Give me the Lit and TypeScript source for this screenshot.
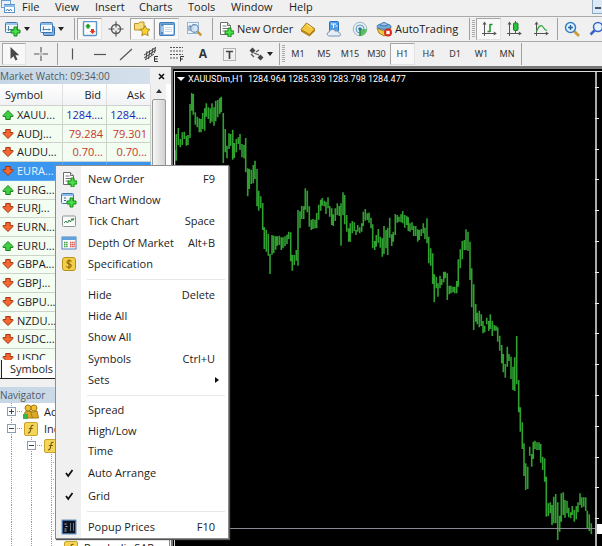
import { LitElement, html, svg, css, nothing } from "lit";
import { customElement, state } from "lit/decorators.js";
import { classMap } from "lit/directives/class-map.js";

const plus = (x: number, y: number) =>
  svg`<path d="M${x + 3} ${y}h3v3h3v3h-3v3h-3v-3h-3v-3h3z" fill="#4be04b" stroke="#128a12" stroke-width="1"/>`;

const dollarTile = svg`<rect x="1.500" y="1.500" width="13" height="13" rx="2.500" fill="#f4cf45" stroke="#b8901c"/><path d="M10.500 5.500C9.500 4 5.800 4.200 5.900 6.200C6 8.200 10.300 7.600 10.300 9.800C10.200 11.900 6.300 11.900 5.300 10.300M8 3.200v9.800" fill="none" stroke="#8a6410" stroke-width="1.100"/>`;

const sheetPlus = svg`<path d="M2.500 1.500h7l3 3v9h-10z" fill="#fff" stroke="#6d6d6d"/><path d="M9.500 1.500v3h3" fill="#ddd" stroke="#6d6d6d"/><path d="M4.500 5h4M4.500 7.500h6M4.500 10h4" stroke="#777"/>${plus(7, 7)}`;

const axes = svg`<path d="M3.500 2v13M1 12.500h13.500" stroke="#555" fill="none"/><path d="M3.500 .5l-2 3h4zM15.800 12.500l-3-2v4z" fill="#555"/>`;

const icons: Record<string, unknown> = {
  app: svg`<rect x="1.500" y="0.500" width="9" height="7" fill="#e6f1fb" stroke="#6aa0d0"/><rect x="4.500" y="4.500" width="10" height="8" fill="#fff" stroke="#5b94c8"/><path d="M4 5h11v2H4z" fill="#8dbbe6"/><path d="M6 11l1.500-2 1.500 2 1.500-2 1.500 2" fill="none" stroke="#4486c4"/>`,
  newChart: svg`<rect x=".5" y="1.500" width="12" height="10" rx="1" fill="#eef6fd" stroke="#3d78b4"/><path d="M1 2h11v2H1z" fill="#9cc4ea"/><path d="M3.500 5v5M2.500 8.500h6" stroke="#5581ad"/>${plus(6, 6)}`,
  profiles: svg`<rect x="4.500" y="5.500" width="11" height="9" rx="1" fill="#7fb0e0" stroke="#3469a0"/><rect x="1.500" y="1.500" width="12" height="10" rx="1" fill="#f2f8fe" stroke="#3d78b4"/><path d="M2 2h11v2H2z" fill="#8dbbe6"/><path d="M4.500 5.500v4M3.500 8.500h8M10 7.500v2" stroke="#5581ad"/>`,
  market: svg`<rect x="1.500" y=".5" width="13" height="14" rx="1" fill="#fff" stroke="#5b94c8" stroke-width="1.400"/><path d="M6 2.500l3 3H7.500v2h-3v-2H3z" fill="#22a022"/><path d="M10.500 13l-3-3H9V8h3v2h1.500z" fill="#e23a1a"/>`,
  target: svg`<circle cx="8" cy="8" r="4.500" fill="none" stroke="#555" stroke-width="1.400"/><path d="M8 .5v6M8 9.500v6M.5 8h6M9.500 8h6" stroke="#555" stroke-width="1.200"/>`,
  favorite: svg`<path d="M.5 2.500h4l1.500-1.500h4v8h-9.500z" fill="#f5dd78" stroke="#b89228"/><path d="M11 4.500l1.600 3.400 3.400.5-2.500 2.500.7 3.800-3.200-1.800-3.200 1.800.7-3.800L6 8.400l3.500-.5z" fill="#fbd52d" stroke="#a77b13" stroke-width=".9"/>`,
  panel: svg`<rect x=".7" y="1.700" width="14.600" height="12.600" rx="1.200" fill="#fff" stroke="#3d7cbd" stroke-width="1.400"/><path d="M1.500 2.500h13v1.500h-13zM1.500 3h3v10.600h-3z" fill="#4d8bc9"/><path d="M2 6h2M2 8h2M2 10h2" stroke="#fff"/><path d="M6 6.500h7M6 8.500h7M6 10.500h7" stroke="#c9d7e6"/>`,
  tester: svg`<rect x="1.500" y="1.500" width="11" height="11" fill="#eef5fb" stroke="#93b6d6"/><path d="M3 10V5h2v5M7 9V3.500" stroke="#4d80b2" fill="none"/><circle cx="8.500" cy="7.500" r="3.800" fill="#cfe3f7" fill-opacity=".8" stroke="#6e8dad" stroke-width="1.200"/><path d="M11.500 10.500l3.700 4" stroke="#c59332" stroke-width="2.500"/>`,
  sheetPlus,
  gold: svg`<path d="M1 8.500L6.500 2l8.500 6-5.500 5.500z" fill="#f1c63c" stroke="#a2761a"/><path d="M1 8.500l8.500 5L15 8v2L9.500 15.500 1 10.500z" fill="#b5831b"/><path d="M6.800 3.500l5 3.500" stroke="#fff1ae"/>`,
  cloud: svg`<rect x="3.500" y=".5" width="9" height="10" rx="1" fill="#4e9ee8" stroke="#2b70b8"/><path d="M5 3h5M7.500 3v4M9.500 5h2" stroke="#fff"/><path d="M3.500 15C.5 15 .5 11 3.200 11c.5-3 5-3.500 6.300-.8 2-.8 3.300.4 3.200 1.600 2.600 0 2.300 3.200.3 3.200z" fill="#e4edf6" stroke="#7793b5"/>`,
  signal: svg`<circle cx="8" cy="8" r="6.800" fill="#e3eef3" stroke="#9bb6c4"/><path d="M8 8V15A7 7 0 0 0 15 8z" fill="#5ec25e"/><circle cx="8" cy="8" r="4" fill="none" stroke="#6298b4"/><circle cx="8" cy="8" r="1.800" fill="#2d78a8"/><path d="M8 9v6" stroke="#22922a" stroke-width="1.500"/>`,
  auto: svg`<path d="M1 7l7 3 7-4-2 6-5 3-5-3z" fill="#f0c845" stroke="#a97e18"/><ellipse cx="8" cy="5.500" rx="7" ry="2.800" fill="#78abd9" stroke="#3b77af"/><path d="M4.500 4.800C5 .5 11 .5 11.500 4.800z" fill="#9dc6ea" stroke="#3b77af"/><circle cx="12" cy="11.500" r="4" fill="#d92a1b"/><rect x="10.300" y="9.800" width="3.400" height="3.400" fill="#fff"/>`,
  bars: svg`${axes}<path d="M9 3v8M9 3.500h2.500M6.500 10.500H9" stroke="#1f8f2c" stroke-width="1.500" fill="none"/>`,
  candles: svg`${axes}<path d="M9.500 0v12" stroke="#187d22"/><rect x="7.500" y="2" width="4.500" height="7.500" rx="1" fill="#27c43a" stroke="#187d22"/>`,
  line: svg`${axes}<path d="M3.500 10.500C6 4 8.500 3.500 10 6S12 9 14 9.500" stroke="#2aa53a" stroke-width="1.200" fill="none"/>`,
  zoomIn: svg`<path d="M10 10l5 5" stroke="#cd9d36" stroke-width="2.800"/><circle cx="6.500" cy="6.500" r="5" fill="#e4f2fe" stroke="#3a7dc0" stroke-width="1.500"/><path d="M6.500 4v5M4 6.500h5" stroke="#2464a8" stroke-width="1.500"/>`,
  zoomOut: svg`<path d="M5.500 9.500l-4 4" stroke="#3d62c8" stroke-width="2.500"/><circle cx="9" cy="6" r="4.500" fill="#e4f2fe" stroke="#3a62c8" stroke-width="1.500"/>`,
  cursor: svg`<path d="M4.500 1v12l3-2.800 2 4.300 2-1-2-4.200h3.800z" fill="#484848"/>`,
  cross: svg`<path d="M8 1v5.500M8 9.500V15M1 8h5.500M9.500 8H15M8 7.500v1" stroke="#555" stroke-width="1.100"/>`,
  vline: svg`<path d="M7.500 2.500v11" stroke="#555" stroke-width="1.200"/>`,
  hline: svg`<path d="M2 8.500h12" stroke="#555" stroke-width="1.200"/>`,
  diag: svg`<path d="M2 14L14 3" stroke="#555" stroke-width="1.200"/>`,
  channel: svg`<path d="M1 9l11-7M1 12l12-8M2 14l9-6M4 5l-1 8M7 4L5.500 13M10 2L8.500 9M12.500 1l-1 6" stroke="#444" fill="none"/><path d="M15 10.500h-3.500v5H15M11.500 13h3" stroke="#333" fill="none"/>`,
  fibo: svg`<path d="M1 1.500h13M1 5h13M1 8.500h13M1 12h9" stroke="#555" stroke-dasharray="2 1"/><path d="M15 10.500h-3.500v5M11.500 13H14" stroke="#333" fill="none"/>`,
  textBox: svg`<rect x="2.500" y="2.500" width="12" height="12" fill="none" stroke="#777" stroke-dasharray="1 1"/><path d="M5 5.500h7M8.500 5.500v7.500" stroke="#444" stroke-width="1.700"/>`,
  arrows: svg`<path d="M4.500 1.500l3 3-3 3-3-3zM12.500 8.500l3 3-3 3-3-3z" fill="#444"/><path d="M3 8l3 3M6 7l5 2M8 6l3-2" stroke="#555" stroke-width="1.300"/>`,
  chartPlus: svg`<rect x=".5" y="1.500" width="12" height="10" rx="1" fill="#eef6fd" stroke="#3d78b4"/><path d="M1 2h11v2H1z" fill="#8dbbe6"/><path d="M3 6h2M3 8.500h2" stroke="#345f8d"/>${plus(6, 6)}`,
  tick: svg`<rect x="1.500" y="3" width="13" height="10.500" rx="1" fill="#fbfdfb" stroke="#8b9490"/><path d="M3 10l2-2 1.500 2L8 7l1.500 2L11 5.500l1 2L13 5" fill="none" stroke="#35804a"/>`,
  depth: svg`<rect x="1" y="2" width="14" height="12" fill="#f8fbfe" stroke="#4f83b8"/><path d="M1 2h14v3H1z" fill="#5fa0dd"/><path d="M3 7.500h4M3 9.500h4M3 11.500h4" stroke="#48a04b" stroke-dasharray="1.500 .6" stroke-width="1.300"/><path d="M9 7.500h5M9 9.500h5M9 11.500h5" stroke="#d65448" stroke-dasharray="1.500 .6" stroke-width="1.300"/>`,
  spec: dollarTile,
  check: svg`<path d="M5 8l2.200 3L11.500 5" fill="none" stroke="#111" stroke-width="1.800"/>`,
  popup: svg`<rect x="1.200" y="1.200" width="13.600" height="13.600" fill="#0b1220" stroke="#4c7fb3" stroke-width="1.200"/><path d="M3.500 5h2M4.500 7.500h2M3.500 10h2M3.500 12h2" stroke="#bbb"/><path d="M9.500 4v8M12.500 4v8" stroke="#687484"/>`,
  func: svg`<rect x="1.500" y="1.500" width="13" height="13" rx="1.500" fill="#f5d557" stroke="#c9a22c"/><path d="M10.500 4.500c-2-.8-2.300.5-2.700 3s-.8 5-2.800 4.200M5.800 7.500h4" fill="none" stroke="#7a5a10" stroke-width="1.200"/>`,
  people: svg`<circle cx="5" cy="4" r="3" fill="#efc034" stroke="#a77b13"/><circle cx="11" cy="4" r="3" fill="#efc034" stroke="#a77b13"/><path d="M1 14l1-6 5-1 3 1 4-1 1.500 7z" fill="#dca825" stroke="#a77b13"/><path d="M7.500 7l2 7" stroke="#a77b13"/><path d="M0 10h5v5H0z" fill="#2fb84a"/>`,
  up: svg`<path d="M8 2L14.500 8.500V10H11v4H5v-4H1.500V8.500z" fill="#3fd045" stroke="#177a1c" stroke-width="1.300" stroke-linejoin="round"/>`,
  down: svg`<path d="M8 14L1.500 7.500V6H5V2h6v4h3.500v1.500z" fill="#f4682f" stroke="#a3300f" stroke-width="1.300" stroke-linejoin="round"/>`,
};

const icon = (name: string) =>
  html`<svg class="icon" viewBox="0 0 16 16" width="16" height="16" aria-hidden="true">${icons[name]}</svg>`;

/* Price bars: triplets of x, high and low in thirds of a pixel, relative to each run's origin. */
const runs = [
  { ox: 170, oy: 64, bars: "14 258 305,19 210 290,25 192 243,31 225 250,37 205 243,43 203 225,49 215 245,54 213 243,60 120 222,65 87 140,70 90 152,76 145 182,82 158 190,88 163 205,93 165 205,98 147 195,104 133 200,109 118 158,115 130 165,121 133 178,126 118 173,132 130 185,137 110 172,143 108 160,149 102 150,154 98 145,160 147 297,166 195 265,171 245 283,177 208 255,182 210 245,188 197 287,193 237 282,199 225 265,205 220 240,210 210 258,216 240 280,222 243 283,227 222 325,233 313 397,238 315 375,244 317 360,250 303 358,255 290 345,261 315 427,266 380 440,272 397 433,278 417 498,283 490 555,289 497 563,295 510 575,300 570 630,306 513 572,311 515 567,317 517 557,322 517 545,328 515 543,334 520 558,339 520 553,345 517 547,351 512 540,356 503 525,362 505 592,367 573 620,373 573 603,379 558 590,384 438 605,390 442 493,395 425 465,401 427 465,406 373 437,412 380 445,418 427 488,424 467 498,429 465 495,435 467 493,440 447 493,446 422 467,452 407 440,457 402 425,463 410 427,468 413 450,474 400 433" },
  { ox: 310, oy: 180, bars: "59 78 110,65 85 135,70 103 138,76 85 123,82 70 105,88 78 108,93 70 197,99 37 105,104 45 133,110 105 155,116 145 185,121 130 185,127 123 160,133 127 153,138 150 165,143 135 155,149 142 160,155 130 155,160 95 138,166 87 122,172 100 120,177 98 128,183 113 145,188 133 205,194 183 210,199 165 200,205 147 188,211 170 203,217 175 230,222 138 222,228 150 205,233 143 225,239 113 173,245 163 198,250 155 185,256 102 165,262 105 128,267 110 125,273 103 127,278 93 130,284 105 143,290 107 135,295 112 153,300 130 155,306 127 150,311 137 168,317 138 168,323 148 185,328 150 180,334 147 168,340 130 160,345 143 177,351 115 190,356 170 250,362 205 257,368 220 312,373 283 367,379 290 325,384 310 350,390 287 325,395 297 315,401 275 307,406 275 295,412 280 360,418 317 343,423 317 340,429 320 337,434 320 340,440 303 340" },
  { ox: 440, oy: 220, bars: "55 118 200,61 88 145,67 63 118,73 60 90,78 28 90,84 35 93,90 65 180,95 145 262,101 193 330,107 252 305,112 278 313,118 272 322,124 283 318,129 303 340,134 317 337,140 293 313,146 303 333,151 283 327,157 302 348,163 315 332,168 317 332,173 322 365,179 347 392,185 375 430,190 402 457,196 432 473,202 380 440,207 402 423,213 410 477,219 440 510,224 412 513,230 348 493" },
  { ox: 490, oy: 380, bars: "86 0 97,91 82 155,97 127 207,102 190 288,107 250 330,113 260 327,119 200 227,125 222 260,130 185 237,135 182 207,141 187 210,147 187 210,152 192 248,158 230 270,164 235 305,169 290 410,175 370 408,181 367 400,186 375 435,191 350 430,197 342 430,203 367 480,209 407 455,214 340 425,220 337 405,225 360 413,231 363 400,236 383 412,242 397 415,247 378 405,253 390 425,259 378 418,264 367 397,270 340 375,275 352 383,281 352 380,287 352 393,292 392 445,298 403 453,304 430 462" },
];

const barPath = runs
  .map((r) =>
    r.bars
      .split(",")
      .map((b) => {
        const [x, hi, lo] = b.split(" ").map((n) => Number(n) / 3);
        return `M${(r.ox + x).toFixed(1)} ${(r.oy + hi).toFixed(1)}V${(r.oy + lo).toFixed(1)}`;
      })
      .join("")
  )
  .join("");

const quotes: [string, string, string?, string?][] = [
  ["up", "XAUU...", "1284....", "1284...."],
  ["down", "AUDJ...", "79.284", "79.301"],
  ["down", "AUDU...", "0.70...", "0.70..."],
  ["down", "EURA..."],
  ["up", "EURG..."],
  ["down", "EURJ..."],
  ["down", "EURN..."],
  ["up", "EURU..."],
  ["down", "GBPA..."],
  ["down", "GBPJ..."],
  ["down", "GBPU..."],
  ["down", "NZDU..."],
  ["down", "USDC..."],
  ["down", "USDC..."],
];

type Entry = { label: string; key?: string; icon?: string; sub?: boolean };
const menuGroups: Entry[][] = [
  [
    { label: "New Order", key: "F9", icon: "sheetPlus" },
    { label: "Chart Window", icon: "chartPlus" },
    { label: "Tick Chart", key: "Space", icon: "tick" },
    { label: "Depth Of Market", key: "Alt+B", icon: "depth" },
    { label: "Specification", icon: "spec" },
  ],
  [
    { label: "Hide", key: "Delete" },
    { label: "Hide All" },
    { label: "Show All" },
    { label: "Symbols", key: "Ctrl+U" },
    { label: "Sets", sub: true },
  ],
  [
    { label: "Spread" },
    { label: "High/Low" },
    { label: "Time" },
    { label: "Auto Arrange", icon: "check" },
    { label: "Grid", icon: "check" },
  ],
  [{ label: "Popup Prices", key: "F10", icon: "popup" }],
];

@customElement("context-menu")
export class ContextMenu extends LitElement {
  static styles = css`
    :host {
      display: block;
      box-sizing: border-box;
      width: 174px;
      padding: 2px 0 0;
      border: 1px solid #8c8c8c;
      background: linear-gradient(90deg, #f0f0f0 25px, #fff 25px);
      box-shadow: 1px 1px 1px #555;
      color: #1c1c1c;
    }
    .group { display: grid; height: 107px; }
    .group.single { height: 22px; }
    .rule { height: 1px; margin: 4px 3px 4px 31px; background: #e8e8e8; }
    .item {
      display: grid;
      grid-template-columns: 24px 1fr auto;
      column-gap: 8px;
      align-items: center;
      padding: 0 13px 0 0;
      border: 0;
      background: none;
      font: inherit;
      color: inherit;
      text-align: left;
      white-space: nowrap;
    }
    .slot { display: flex; justify-content: center; padding-left: 2px; }
    .sub { width: 0; height: 0; margin-right: -4px; border: 3px solid transparent; border-left: 4px solid #111; border-right: 0; }
  `;

  render() {
    return menuGroups.map(
      (g, i) => html`
        ${i ? html`<div class="rule" role="separator"></div>` : nothing}
        <div class=${classMap({ group: true, single: g.length === 1 })} role="group">
          ${g.map(
            (e) => html`<button class="item" role="menuitem">
              <span class="slot">${e.icon ? icon(e.icon) : nothing}</span>
              <span>${e.label}</span>
              ${e.sub ? html`<span class="sub"></span>` : html`<span>${e.key ?? ""}</span>`}
            </button>`
          )}
        </div>
      `
    );
  }
}

@customElement("price-chart")
export class PriceChart extends LitElement {
  static styles = css`
    :host {
      display: grid;
      grid-template-columns: minmax(0, 1fr) 7px;
      box-sizing: border-box;
      border: solid #777;
      border-width: 2px 0 0 2px;
      padding: 2px 0 0 1px;
      background: #000;
      overflow: hidden;
    }
    .plot { display: flex; flex-direction: column; min-width: 0; border: solid #ddd; border-width: 1px 0 0 1px; }
    .title {
      display: flex;
      align-items: center;
      gap: 3px;
      height: 14px;
      padding-left: 2px;
      font: 9px/14px Roboto, "Liberation Sans", sans-serif;
      color: #fff;
      white-space: pre;
    }
    .caret { border: 4px solid transparent; border-top: 4px solid #fff; border-bottom: 0; }
    .bars { display: block; width: 100%; flex: 1; min-height: 0; }
    .scale { display: block; width: 7px; height: 100%; border-top: 1px solid #ddd; box-sizing: border-box; }
  `;

  render() {
    const ticks = Array.from({ length: 15 }, (_, i) => 87 + Math.round(i * 30.8));
    return html`
      <div class="plot">
        <div class="title"><span class="caret"></span>XAUUSDm,H1  1284.964 1285.339 1283.798 1284.477</div>
        <svg class="bars" role="img" aria-label="XAUUSDm hourly bars">
          <g transform="translate(-175 -86)">
            <path d=${barPath} stroke="#30a031" stroke-width="1.600" fill="none" />
            <path d="M170 528.500H1600" stroke="#8a8a94" />
          </g>
        </svg>
      </div>
      <svg class="scale" aria-hidden="true">
        <path d="M1 0V2000" stroke="#aaa" stroke-width="2" />
        <g transform="translate(0 -72)">
          ${ticks.map((y) => svg`<path d=${`M0 ${y + 0.5}h4`} stroke="#eee"/>`)}
          <path d="M2 524h5v10h-5z" fill="#fff" />
        </g>
      </svg>
    `;
  }
}

@customElement("app-root")
export class AppRoot extends LitElement {
  @state() private selected = 3;

  static styles = css`
    :host {
      display: flex;
      flex-direction: column;
      position: relative;
      height: 100vh;
      overflow: hidden;
      background: #f0f0f0;
      font: 11px/14px "Open Sans", "Noto Sans", sans-serif;
      color: #1c1c1c;
    }
    button { border: 0; padding: 0; background: none; font: inherit; color: inherit; white-space: nowrap; }
    .icon { flex: none; display: block; }
    .menubar {
      display: grid;
      grid-template-columns: 22px 33px 40px 44px 49px 43px 58px 1fr 10px;
      height: 16px;
      border-bottom: 1px solid #a9a9a9;
    }
    .menubar button { text-align: left; height: 14px; }
    .child { border: 1px solid #8ea7c0; border-width: 0 0 1px 1px; background: #dbe9f7; display: flex; justify-content: center; align-items: flex-end; padding-bottom: 4px; }
    .child::before { content: ""; width: 6px; height: 2px; background: #44566a; }
    .bar { display: grid; align-items: center; border-bottom: 1px solid #a9a9a9; overflow: hidden; }
    .standard {
      grid-template-columns: 34px 37px 6px 25px 28px 24px 25px 30px 7px 78px 28px 24px 28px 93px 4px 5px 25px 26px 28px 4px 25px 26px;
      height: 24px;
    }
    .drawing {
      grid-template-columns: 24px 30px 3px 28px 26px 26px 24px 28px 24px 28px 34px 4px 4px 26px 26px 26px 27px 25px 27px 26px 27px 24px 4px;
      height: 24px;
      padding-left: 2px;
      border-bottom: 1px solid #777;
      font: 9px/14px "Noto Sans", sans-serif;
      color: #333;
    }
    .tool { display: flex; align-items: center; justify-content: center; height: 22px; gap: 3px; }
    .wide { justify-content: flex-start; padding-left: 2px; }
    .drop { justify-content: flex-start; padding-left: 5px; }
    .on { box-sizing: border-box; border: 1px solid #a5a5a5; border-right-color: #e2e2e2; border-bottom-color: #e2e2e2; background: #f8f8f8; }
    .letter { font: bold 12px/14px "Open Sans", sans-serif; }
    .arrow { border: 3px solid transparent; border-top: 4px solid #222; border-bottom: 0; }
    .sep { width: 1px; height: 22px; background: #a0a0a0; justify-self: center; }
    .grip { width: 3px; height: 18px; background: repeating-linear-gradient(#aaa 0 1px, #f0f0f0 1px 2px); justify-self: center; }
    .main { display: grid; grid-template-columns: 171px minmax(0, 1fr); flex: 1; min-height: 0; }
    .side { display: flex; flex-direction: column; min-height: 0; min-width: 0; overflow: hidden; }
    .head {
      display: flex;
      align-items: center;
      justify-content: space-between;
      flex: none;
      height: 16px;
      margin-top: 1px;
      padding-right: 6px;
      background: linear-gradient(90deg, #c6d6e5, #d4e0eb 150px, #f0f0f0 150px);
      font-size: 10px;
      color: #4e5964;
    }
    .close { display: flex; color: #111; }
    .watch { display: grid; grid-template-columns: 151px 15px; height: 276px; overflow: hidden; background: #fff; }
    .quotes { width: 151px; height: 284px; border-collapse: collapse; table-layout: fixed; }
    .quotes th {
      height: 21px;
      padding: 0 5px 0 0;
      font-weight: normal;
      text-align: right;
      background: linear-gradient(#fff, #f1f2f4);
      border-right: 1px solid #e0e0e0;
      border-bottom: 1px solid #d0d0d0;
    }
    .quotes th.first { width: 57px; padding-left: 5px; padding-right: 0; text-align: left; }
    .quotes td { padding: 0 3px 0 0; text-align: right; border: 1px solid #ccd3c8; border-width: 0 1px 1px 0; background: #f3fdf1; white-space: nowrap; overflow: hidden; line-height: 16px; color: #c8372b; }
    .quotes td.name { text-align: left; color: #1c1c1c; }
    .name div { display: flex; align-items: center; gap: 3px; }
    .name .icon { width: 12px; height: 12px; padding-left: 2px; }
    .quotes .rise td { color: #1f1fc0; }
    .quotes .rise td.name { color: #1c1c1c; }
    .quotes .selected td, .quotes .selected td.name { background: #3a96ee; color: #eaf4ff; border-color: #5aa9f2; }
    .scroll { display: flex; flex-direction: column; align-items: center; background: #f0f0f0; }
    .upper { margin: 5px 0 6px; border: 3px solid transparent; border-bottom: 4px solid #333; border-top: 0; }
    .thumb { flex: 1; width: 12px; border: 1px solid #999; border-radius: 2px; background: linear-gradient(90deg, #f6f6f6, #d2d2d2); }
    .tabs { display: flex; flex: none; height: 18px; border-bottom: 1px solid #222; margin-bottom: 7px; }
    .tab { width: 66px; margin-left: 1px; padding-left: 8px; border-left: 1px solid #222; background: #fff; text-align: left; }
    .tree { flex: 1; min-height: 0; margin: 0 1px 0 0; padding: 0; list-style: none; background: #fff; border-right: 1px solid #888; overflow: hidden; }
    .node { display: flex; align-items: center; height: 17px; }
    .rail { flex: none; width: 20px; height: 17px; background: repeating-linear-gradient(#999 0 1px, transparent 1px 2px) 11px 0 / 1px 17px no-repeat; }
    .branch { display: flex; align-items: center; justify-content: center; width: 23px; flex: none; height: 17px; background: repeating-linear-gradient(#999 0 1px, transparent 1px 2px) 11px 0 / 1px 17px no-repeat, repeating-linear-gradient(90deg, #999 0 1px, transparent 1px 2px) 11px 8px / 12px 1px no-repeat; }
    .box { width: 9px; height: 9px; box-sizing: border-box; border: 1px solid #8b9db0; background: linear-gradient(#345, #345) center / 5px 1px no-repeat, #fff; }
    .box.closed { background: linear-gradient(#345, #345) center / 5px 1px no-repeat, linear-gradient(#345, #345) center / 1px 5px no-repeat, #fff; }
    .caption { padding-left: 5px; white-space: nowrap; }
    .popup { position: absolute; left: 55px; top: 165px; }
  `;

  private tool(name: string, label: string, on = false) {
    return html`<button class=${classMap({ tool: true, on })} aria-label=${label}>${icon(name)}</button>`;
  }

  private node(depth: number, name: string, text: string, closed?: boolean) {
    return html`<li class="node">
      ${Array.from({ length: depth }, () => html`<span class="rail"></span>`)}
      <span class="branch">${closed === undefined ? nothing : html`<span class=${classMap({ box: true, closed })}></span>`}</span>
      ${icon(name)}<span class="caption">${text}</span>
    </li>`;
  }

  render() {
    const sep = html`<span class="sep"></span>`;
    const grip = html`<span class="grip"></span>`;
    const drop = (name: string, label: string) =>
      html`<button class="tool drop" aria-label=${label}>${icon(name)}<span class="arrow"></span></button>`;
    return html`
      <nav class="menubar">
        ${icon("app")}
        ${["File", "View", "Insert", "Charts", "Tools", "Window", "Help"].map((m) => html`<button>${m}</button>`)}
        <button class="child" aria-label="Minimize"></button>
      </nav>
      <div class="bar standard" role="toolbar">
        ${drop("newChart", "New chart")} ${drop("profiles", "Profiles")} ${sep}
        ${this.tool("market", "Market Watch", true)} ${this.tool("target", "Data Window")}
        ${this.tool("favorite", "Navigator", true)} ${this.tool("panel", "Terminal", true)}
        ${this.tool("tester", "Strategy Tester")} ${sep}
        <button class="tool wide">${icon("sheetPlus")}New Order</button>
        ${this.tool("gold", "MetaEditor")} ${this.tool("cloud", "Community")} ${this.tool("signal", "Signals")}
        <button class="tool wide">${icon("auto")}AutoTrading</button>
        ${sep} ${grip} ${this.tool("bars", "Bar chart", true)} ${this.tool("candles", "Candlesticks")}
        ${this.tool("line", "Line chart")} ${sep} ${this.tool("zoomIn", "Zoom in")} ${this.tool("zoomOut", "Zoom out")}
      </div>
      <div class="bar drawing" role="toolbar">
        ${this.tool("cursor", "Cursor", true)} ${this.tool("cross", "Crosshair")} ${sep}
        ${this.tool("vline", "Vertical line")} ${this.tool("hline", "Horizontal line")} ${this.tool("diag", "Trendline")}
        ${this.tool("channel", "Channel")} ${this.tool("fibo", "Fibonacci")}
        <button class="tool letter">A</button>
        ${this.tool("textBox", "Text label")} ${drop("arrows", "Arrows")} ${sep} ${grip}
        ${["M1", "M5", "M15", "M30", "H1", "H4", "D1", "W1", "MN"].map(
          (t) => html`<button class=${classMap({ tool: true, on: t === "H1" })}>${t}</button>`
        )}
        ${sep}
      </div>
      <div class="main">
        <aside class="side">
          <div class="head">
            <span>Market Watch: 09:34:00</span>
            <button class="close" aria-label="Close">
              <svg width="7" height="7" viewBox="0 0 7 7"><path d="M1 1l5 5M6 1l-5 5" stroke="#111" stroke-width="1.600" /></svg>
            </button>
          </div>
          <div class="watch">
            <table class="quotes">
              <thead>
                <tr><th class="first">Symbol</th><th>Bid</th><th>Ask</th></tr>
              </thead>
              <tbody>
                ${quotes.map(
                  ([dir, name, bid, ask], i) => html`<tr
                    class=${classMap({ rise: dir === "up", selected: i === this.selected })}
                    @click=${() => (this.selected = i)}
                  >
                    <td class="name"><div>${icon(dir)}${name}</div></td>
                    <td>${bid}</td>
                    <td>${ask}</td>
                  </tr>`
                )}
              </tbody>
            </table>
            <div class="scroll"><span class="upper"></span><span class="thumb"></span></div>
          </div>
          <div class="tabs"><button class="tab">Symbols</button></div>
          <div class="head"><span>Navigator</span></div>
          <ul class="tree">
            ${this.node(0, "people", "Accounts", true)} ${this.node(0, "func", "Indicators", false)}
            ${this.node(1, "func", "Trend", false)}
            ${["", "", "", "", ""].map(() => this.node(2, "func", ""))}
            ${this.node(2, "func", "Parabolic SAR")}
          </ul>
        </aside>
        <price-chart></price-chart>
      </div>
      <context-menu class="popup" role="menu"></context-menu>
    `;
  }
}
